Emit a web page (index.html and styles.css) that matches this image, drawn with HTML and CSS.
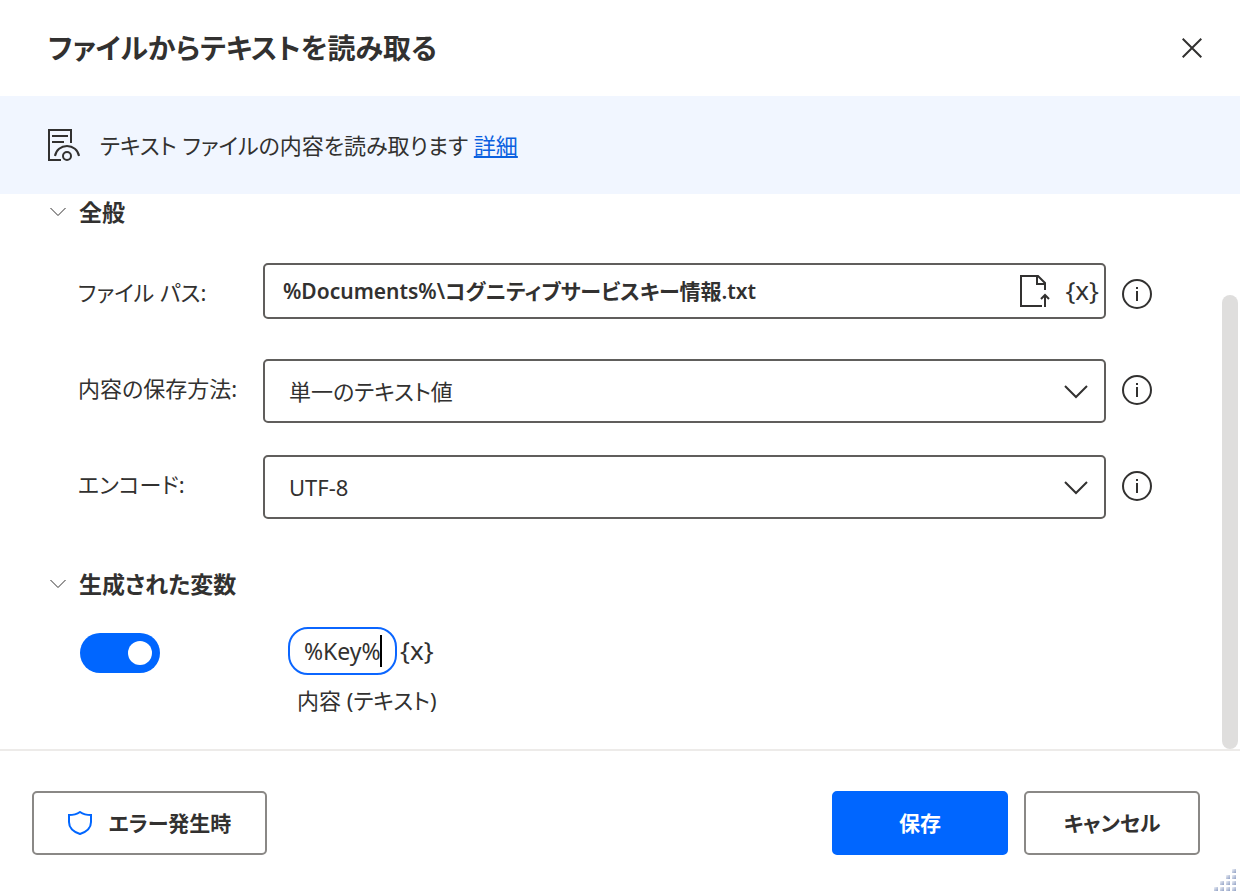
FILE: index.html
```html
<!DOCTYPE html>
<html lang="ja">

<head>
    <meta charset="UTF-8">
    <meta name="viewport" content="width=device-width, initial-scale=1.0">
    <title>ファイルからテキストを読み取る</title>
    <link rel="stylesheet" href="styles.css">
</head>

<body>
    <!-- Header -->
    <header class="header">
        <h1>ファイルからテキストを読み取る</h1>
        <button class="icon-button close" type="button" aria-label="閉じる">
            <svg width="20" height="20" viewBox="0 0 20 20"><path d="M.7.7l18.6 18.6M19.3.7L.7 19.3"/></svg>
        </button>
    </header>

    <!-- Description -->
    <div class="banner">
        <svg class="banner-icon" width="32" height="32" viewBox="0 0 32 32">
            <path d="M13 31H1V1h22v13M4 7h16M4 13h12"/>
            <path d="M7 27c1-6 6-10 12-10s11 4 12 10"/>
            <circle cx="19" cy="27" r="4"/>
        </svg>
        <p>テキスト ファイルの内容を読み取ります <a href="#">詳細</a></p>
    </div>

    <!-- Parameters -->
    <main class="content">
        <form class="params" id="params">
            <h2 class="section-title">
                <svg width="16" height="10" viewBox="0 0 16 10"><path d="M.5 1L8 8.5 15.5 1"/></svg>
                全般
            </h2>
            <div class="fields">
                <div class="row">
                    <label for="path">ファイル パス:</label>
                    <div class="path-box">
                        <input id="path" type="text" value="%Documents%\コグニティブサービスキー情報.txt">
                        <button class="icon-button" type="button" aria-label="ファイルの選択">
                            <svg width="32" height="34" viewBox="0 0 32 34">
                                <path d="M23 32H2V2h17l7 7v7M18 2v8h8"/>
                                <path d="M26 33V21M22 25l4-4 4 4"/>
                            </svg>
                        </button>
                        <button class="icon-button var-button" type="button" aria-label="変数の選択">{x}</button>
                    </div>
                    <button class="icon-button info" type="button" aria-label="情報">
                        <svg width="30" height="30" viewBox="0 0 30 30"><circle cx="15" cy="15" r="14"/><path d="M15 12v10M15 8v2"/></svg>
                    </button>
                </div>
                <div class="row">
                    <label for="store">内容の保存方法:</label>
                    <div class="select-box">
                        <select id="store">
                            <option>単一のテキスト値</option>
                        </select>
                        <svg width="24" height="14" viewBox="0 0 24 14"><path d="M1 1l11 11L23 1"/></svg>
                    </div>
                    <button class="icon-button info" type="button" aria-label="情報">
                        <svg width="30" height="30" viewBox="0 0 30 30"><circle cx="15" cy="15" r="14"/><path d="M15 12v10M15 8v2"/></svg>
                    </button>
                </div>
                <div class="row">
                    <label for="encoding">エンコード:</label>
                    <div class="select-box">
                        <select id="encoding">
                            <option>UTF-8</option>
                        </select>
                        <svg width="24" height="14" viewBox="0 0 24 14"><path d="M1 1l11 11L23 1"/></svg>
                    </div>
                    <button class="icon-button info" type="button" aria-label="情報">
                        <svg width="30" height="30" viewBox="0 0 30 30"><circle cx="15" cy="15" r="14"/><path d="M15 12v10M15 8v2"/></svg>
                    </button>
                </div>
            </div>

            <h2 class="section-title">
                <svg width="16" height="10" viewBox="0 0 16 10"><path d="M.5 1L8 8.5 15.5 1"/></svg>
                生成された変数
            </h2>
            <div class="variable">
                <input class="toggle" type="checkbox" role="switch" aria-label="変数を生成する" checked>
                <div class="variable-info">
                    <div class="variable-name">
                        <div class="name-box">
                            <input id="variable" type="text" value="%Key%">
                            <span class="caret"></span>
                        </div>
                        <button class="icon-button var-button" type="button" aria-label="変数の選択">{x}</button>
                    </div>
                    <label for="variable">内容 (テキスト)</label>
                </div>
            </div>
        </form>
        <div class="scroll-thumb"></div>
    </main>

    <!-- Footer -->
    <footer class="footer">
        <button class="button error-button" type="button">
            <svg width="24" height="24" viewBox="0 0 24 24"><path d="M12 1c3 2 7 3 11 3v7c0 6-5 10-11 12C6 21 1 17 1 11V4c4 0 8-1 11-3z"/></svg>
            エラー発生時
        </button>
        <button class="button primary" type="submit" form="params">保存</button>
        <button class="button" type="button">キャンセル</button>
        <svg class="grip" width="22" height="22" viewBox="0 0 22 22">
            <linearGradient id="dot" x1="0" y1="0" x2="1" y2="1">
                <stop offset="0" stop-color="#f1f3f8"/>
                <stop offset="1" stop-color="#8f9fc4"/>
            </linearGradient>
            <g fill="url(#dot)">
                <rect x="18" y="0" width="4" height="4"/>
                <rect x="12" y="6" width="4" height="4"/>
                <rect x="18" y="6" width="4" height="4"/>
                <rect x="6" y="12" width="4" height="4"/>
                <rect x="12" y="12" width="4" height="4"/>
                <rect x="18" y="12" width="4" height="4"/>
                <rect x="0" y="18" width="4" height="4"/>
                <rect x="6" y="18" width="4" height="4"/>
                <rect x="12" y="18" width="4" height="4"/>
                <rect x="18" y="18" width="4" height="4"/>
            </g>
        </svg>
    </footer>
</body>

</html>
```
FILE: styles.css
```css
* {
    box-sizing: border-box;
    margin: 0;
    padding: 0;
}

body {
    min-height: 100vh;
    display: flex;
    flex-direction: column;
    font-family: "Noto Sans", "Noto Sans CJK JP", sans-serif;
    font-size: 23px;
    font-feature-settings: "palt";
    line-height: 36px;
    color: #323130;
    background-color: #fff;
}

input,
select,
button {
    font: inherit;
    font-feature-settings: inherit;
    color: inherit;
}

svg {
    fill: none;
    stroke: #323130;
    stroke-width: 2;
    flex-shrink: 0;
}

.icon-button {
    display: flex;
    align-items: center;
    justify-content: center;
    border: none;
    background: none;
    cursor: pointer;
}

.var-button {
    height: 44px;
    padding-bottom: 3px;
    font-size: 26px;
}

.header {
    height: 96px;
    padding: 0 38px 0 48px;
    display: flex;
    align-items: center;
    justify-content: space-between;
}

.header h1 {
    font-size: 28px;
    font-weight: 600;
}

.banner {
    height: 98px;
    padding: 0 48px;
    display: flex;
    align-items: center;
    gap: 20px;
    background-color: #f1f6ff;
    font-size: 22px;
}

.banner a {
    color: #0b61e0;
}

.content {
    flex: 1;
    display: flex;
    padding-right: 2px;
}

.params {
    flex: 1;
    padding: 0 70px 24px 50px;
}

.section-title {
    display: flex;
    align-items: center;
    gap: 13px;
    font-size: 23px;
    font-weight: 600;
}

.section-title svg {
    stroke-width: 1;
}

.fields {
    display: grid;
    gap: 32px;
    padding: 33px 0 47px 28px;
}

.row {
    display: grid;
    grid-template-columns: 169px 1fr 30px;
    column-gap: 16px;
    min-height: 64px;
    align-items: start;
}

.row label {
    font-size: 22px;
    line-height: 58px;
    white-space: nowrap;
}

.path-box {
    height: 56px;
    padding: 0 5px 0 18px;
    display: flex;
    align-items: center;
    gap: 14px;
    border: 2px solid #605e5c;
    border-radius: 5px;
}

.path-box input {
    flex: 1;
    min-width: 0;
    border: none;
    outline: none;
    background: none;
    font-size: 21px;
    font-weight: 600;
}

.select-box {
    position: relative;
}

.select-box select {
    width: 100%;
    height: 64px;
    padding: 0 60px 0 24px;
    appearance: none;
    border: 2px solid #605e5c;
    border-radius: 5px;
    background-color: #fff;
    font-size: 22px;
}

.select-box svg {
    position: absolute;
    right: 18px;
    top: 26px;
    pointer-events: none;
}

.info {
    height: 62px;
}

.variable {
    display: flex;
    gap: 128px;
    padding: 25px 0 0 30px;
}

.toggle {
    appearance: none;
    width: 80px;
    height: 40px;
    margin-top: 6px;
    padding: 8px;
    display: flex;
    border-radius: 20px;
    background-color: #8a8886;
    cursor: pointer;
}

.toggle::before {
    content: "";
    width: 24px;
    height: 24px;
    border-radius: 50%;
    background-color: #fff;
}

.toggle:checked {
    justify-content: flex-end;
    background-color: #0066ff;
}

.variable-name {
    display: flex;
    align-items: center;
    gap: 3px;
}

.name-box {
    position: relative;
}

.name-box input {
    width: 109px;
    height: 48px;
    padding: 0 14px;
    border: 2px solid #0b66ff;
    border-radius: 20px;
    outline: none;
}

.caret {
    position: absolute;
    right: 15px;
    top: 8px;
    width: 2px;
    height: 32px;
    background-color: #000;
}

.variable-info label {
    display: block;
    padding: 7px 0 0 9px;
    font-size: 22px;
}

.scroll-thumb {
    width: 16px;
    margin-top: 101px;
    border-radius: 8px;
    background-color: #dfdedd;
}

.footer {
    position: relative;
    height: 146px;
    padding: 0 40px 0 32px;
    display: flex;
    align-items: center;
    gap: 16px;
    border-top: 2px solid #edebe9;
}

.button {
    width: 176px;
    height: 64px;
    border: 2px solid #8a8886;
    border-radius: 5px;
    background-color: #fff;
    font-size: 21px;
    font-weight: 600;
    cursor: pointer;
}

.primary {
    border-color: #0066ff;
    background-color: #0066ff;
    color: #fff;
}

.error-button {
    width: 235px;
    margin-right: auto;
    display: flex;
    align-items: center;
    justify-content: center;
    gap: 17px;
}

.error-button svg {
    stroke: #0066ff;
}

.grip {
    position: absolute;
    right: 4px;
    bottom: 4px;
    stroke: none;
}
```
